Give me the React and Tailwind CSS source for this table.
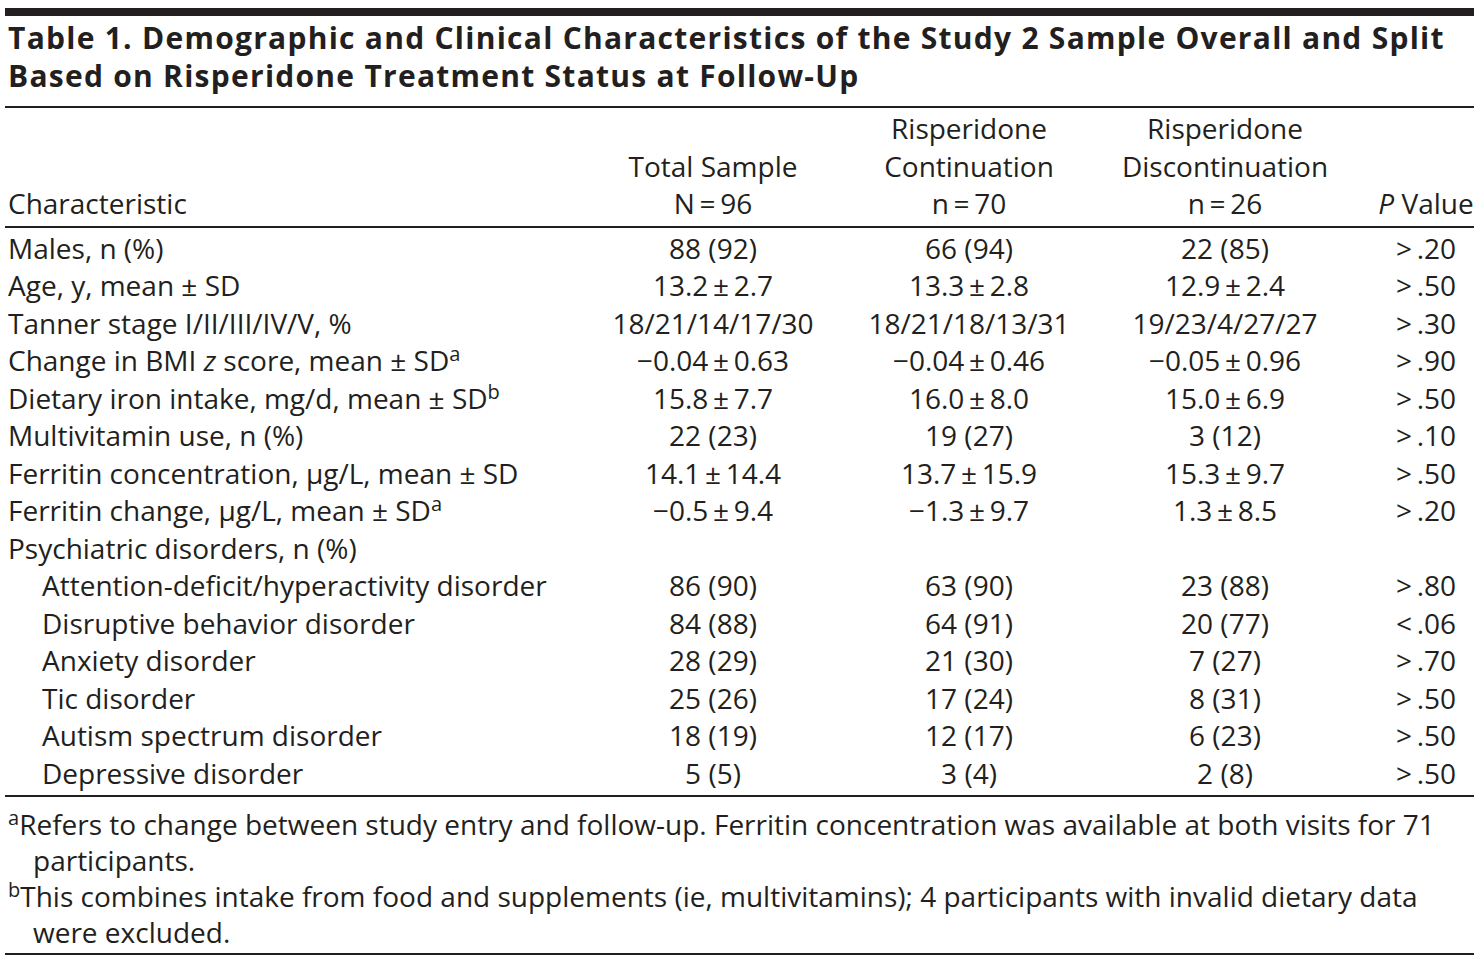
const sup = 'text-[20px] leading-none -top-[10px]'

const rows = [
  { label: 'Males, n (%)', v: ['88 (92)', '66 (94)', '22 (85)'], p: '>\u2009.20' },
  { label: 'Age, y, mean ± SD', v: ['13.2\u2009±\u20092.7', '13.3\u2009±\u20092.8', '12.9\u2009±\u20092.4'], p: '>\u2009.50' },
  { label: 'Tanner stage I/II/III/IV/V, %', v: ['18/21/14/17/30', '18/21/18/13/31', '19/23/4/27/27'], p: '>\u2009.30' },
  {
    label: (
      <>
        Change in BMI <i>z</i> score, mean ± SD<sup className={sup}>a</sup>
      </>
    ),
    v: ['\u22120.04\u2009±\u20090.63', '\u22120.04\u2009±\u20090.46', '\u22120.05\u2009±\u20090.96'],
    p: '>\u2009.90',
  },
  {
    label: (
      <>
        Dietary iron intake, mg/d, mean ± SD<sup className={sup}>b</sup>
      </>
    ),
    v: ['15.8\u2009±\u20097.7', '16.0\u2009±\u20098.0', '15.0\u2009±\u20096.9'],
    p: '>\u2009.50',
  },
  { label: 'Multivitamin use, n (%)', v: ['22 (23)', '19 (27)', '3 (12)'], p: '>\u2009.10' },
  { label: 'Ferritin concentration, µg/L, mean ± SD', v: ['14.1\u2009±\u200914.4', '13.7\u2009±\u200915.9', '15.3\u2009±\u20099.7'], p: '>\u2009.50' },
  {
    label: (
      <>
        Ferritin change, µg/L, mean ± SD<sup className={sup}>a</sup>
      </>
    ),
    v: ['\u22120.5\u2009±\u20099.4', '\u22121.3\u2009±\u20099.7', '1.3\u2009±\u20098.5'],
    p: '>\u2009.20',
  },
  { label: 'Psychiatric disorders, n (%)', v: ['', '', ''], p: '' },
  { label: 'Attention-deficit/hyperactivity disorder', indent: true, v: ['86 (90)', '63 (90)', '23 (88)'], p: '>\u2009.80' },
  { label: 'Disruptive behavior disorder', indent: true, v: ['84 (88)', '64 (91)', '20 (77)'], p: '<\u2009.06' },
  { label: 'Anxiety disorder', indent: true, v: ['28 (29)', '21 (30)', '7 (27)'], p: '>\u2009.70' },
  { label: 'Tic disorder', indent: true, v: ['25 (26)', '17 (24)', '8 (31)'], p: '>\u2009.50' },
  { label: 'Autism spectrum disorder', indent: true, v: ['18 (19)', '12 (17)', '6 (23)'], p: '>\u2009.50' },
  { label: 'Depressive disorder', indent: true, v: ['5 (5)', '3 (4)', '2 (8)'], p: '>\u2009.50' },
]

const grid = 'grid grid-cols-[577px_256px_256px_256px_121px]'

export default function App() {
  return (
    <div className="min-h-screen bg-white text-[#231f20] font-['Open_Sans',sans-serif]">
      <div className="ml-[5px] w-[1469px] pt-[8px]">
        <div className="h-[8px] bg-[#231f20]" />

        <h1 className="pl-[3px] pt-[3px] text-[30px] leading-[37.5px] font-bold tracking-[1.26px] whitespace-nowrap">
          Table 1. Demographic and Clinical Characteristics of the Study 2 Sample Overall and Split
          <br />
          Based on Risperidone Treatment Status at Follow-Up
        </h1>

        <div className="mt-[12px] h-[2px] bg-[#231f20]" />

        <div className={`${grid} items-end pl-[3px] pt-[2px] pb-[3px] text-[28px] leading-[37.5px]`}>
          <div>Characteristic</div>
          <div className="text-center">
            Total Sample
            <br />
            N{'\u2009'}={'\u2009'}96
          </div>
          <div className="text-center">
            Risperidone
            <br />
            Continuation
            <br />
            n{'\u2009'}={'\u2009'}70
          </div>
          <div className="text-center">
            Risperidone
            <br />
            Discontinuation
            <br />
            n{'\u2009'}={'\u2009'}26
          </div>
          <div className="pl-[25px] text-center whitespace-nowrap">
            <i>P</i> Value
          </div>
        </div>

        <div className="h-[2px] bg-[#231f20]" />

        <div className="pl-[3px] pt-[2px] pb-[3px] text-[28px] leading-[37.5px]">
          {rows.map((r, i) => (
            <div key={i} className={grid}>
              <div className={r.indent ? 'pl-[34px] whitespace-nowrap' : 'whitespace-nowrap'}>{r.label}</div>
              {r.v.map((v, j) => (
                <div key={j} className="text-center whitespace-nowrap">{v}</div>
              ))}
              <div className="pl-[25px] text-center whitespace-nowrap">{r.p}</div>
            </div>
          ))}
        </div>

        <div className="h-[2px] bg-[#231f20]" />

        <div className="pl-[3px] pt-[9px] pb-[3px] text-[28px] leading-[36px]">
          <div className="whitespace-nowrap">
            <sup className={sup}>a</sup>Refers to change between study entry and follow-up. Ferritin concentration was available at both visits for 71
          </div>
          <div className="pl-[25px]">participants.</div>
          <div className="whitespace-nowrap">
            <sup className={sup}>b</sup>This combines intake from food and supplements (ie, multivitamins); 4 participants with invalid dietary data
          </div>
          <div className="pl-[25px]">were excluded.</div>
        </div>

        <div className="h-[2px] bg-[#231f20]" />
      </div>
    </div>
  )
}
